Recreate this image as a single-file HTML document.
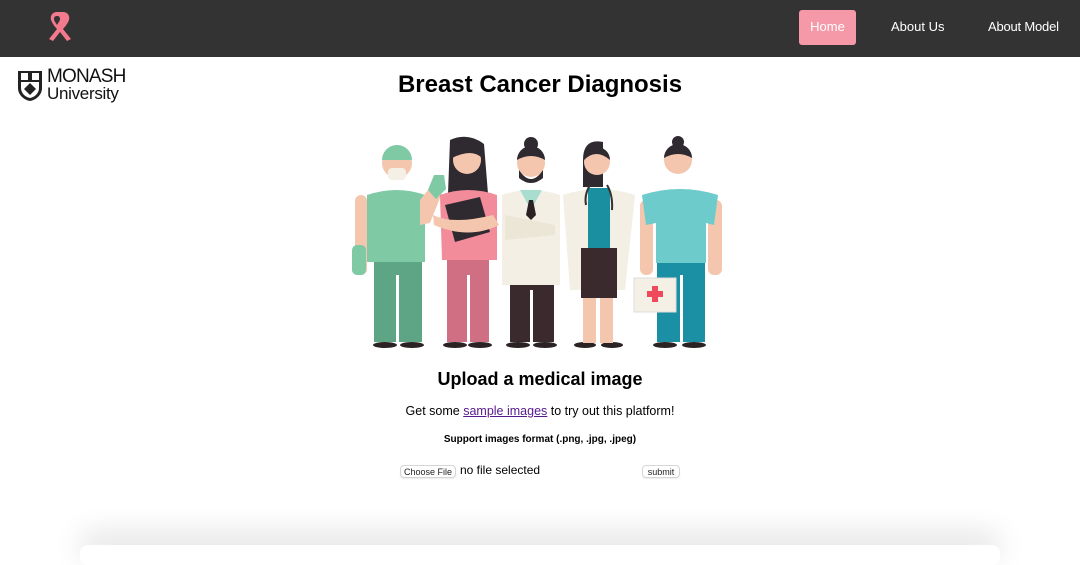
<!DOCTYPE html>
<html><head><meta charset="utf-8"><style>
*{margin:0;padding:0;box-sizing:border-box}
body{width:1080px;height:539px;overflow:hidden;background:#fff;font-family:"Liberation Sans",Arial,sans-serif;position:relative}
.nav{position:absolute;left:0;top:0;width:1080px;height:57px;background:#333}
.nav a{position:absolute;top:0;color:#fff;font-size:13px;text-decoration:none;line-height:14px}
.home{left:799px;top:10px!important;width:57px;height:35px;background:#f598a8;border-radius:3px;text-align:center;padding-top:10px}
h1{position:absolute;left:0;width:1080px;top:71px;text-align:center;font-size:24px;font-weight:bold}
h2{position:absolute;left:0;width:1080px;top:369px;text-align:center;font-size:18px;font-weight:bold}
.p{position:absolute;left:0;width:1080px;text-align:center}
.btn{position:absolute;border:1px solid #d6d6d6;border-radius:4px;background:#fff;font-size:9px;color:#222;text-align:center;line-height:12px;box-shadow:0 1px 1px rgba(0,0,0,.08)}
</style></head><body>
<div class="nav">
<svg style="position:absolute;left:42px;top:9px" width="30" height="34" viewBox="0 0 30 34">
<path d="M15 3c-5 0-7 4-6 8 1 3 4 7 6 9l-8 10 4 2 7-9 7 9 4-2-8-10c2-2 5-6 6-9 1-4-1-8-6-8zm0 4c2 0 3 1 3 3 0 2-2 4-3 6-1-2-3-4-3-6 0-2 1-3 3-3z" fill="#f27a8c"/>
</svg>
<a class="home" href="#">Home</a>
<a href="#" style="left:891px;top:20px">About Us</a>
<a href="#" style="left:988px;top:20px;letter-spacing:-0.2px">About Model</a>
</div>
<svg style="position:absolute;left:16px;top:70px" width="28" height="32" viewBox="0 0 28 32">
<path d="M2 1h24v17c0 7-6 12-12 13C8 30 2 25 2 18z" fill="#222"/>
<path d="M5 12h18v6c0 5-4 9-9 10-5-1-9-5-9-10z" fill="#fff"/>
<path d="M14 13l6 6-6 6-6-6z" fill="#222"/>
<rect x="5" y="3" width="7" height="7" fill="#fff"/><rect x="16" y="3" width="7" height="7" fill="#fff"/>
</svg>
<div style="position:absolute;left:47px;top:68px;font-size:19px;line-height:18px;color:#111;letter-spacing:-0.8px">MONASH</div>
<div style="position:absolute;left:47px;top:85px;font-size:17px;line-height:17px;color:#111;letter-spacing:-0.3px">University</div>
<h1>Breast Cancer Diagnosis</h1>
<svg style="position:absolute;left:0;top:0" width="1080" height="539">
<g fill="#2b2224">
<ellipse cx="385" cy="345" rx="12" ry="3"/><ellipse cx="412" cy="345" rx="12" ry="3"/>
<ellipse cx="455" cy="345" rx="12" ry="3"/><ellipse cx="480" cy="345" rx="12" ry="3"/>
<ellipse cx="518" cy="345" rx="12" ry="3"/><ellipse cx="545" cy="345" rx="12" ry="3"/>
<ellipse cx="585" cy="345" rx="11" ry="3"/><ellipse cx="612" cy="345" rx="11" ry="3"/>
<ellipse cx="665" cy="345" rx="12" ry="3"/><ellipse cx="694" cy="345" rx="12" ry="3"/>
</g>
<rect x="355" y="195" width="12" height="80" rx="6" fill="#f4c6ad"/>
<rect x="352" y="245" width="14" height="30" rx="5" fill="#7fc9a5"/>
<rect x="374" y="262" width="48" height="80" fill="#5ea585"/>
<rect x="396" y="275" width="3" height="67" fill="#fff"/>
<path d="M367 195q30-10 58 0v67h-58z" fill="#7fc9a5"/>
<path d="M420 200l12-15 10 8-12 30-10 2z" fill="#f4c6ad"/>
<path d="M428 190l6-15 10 0 2 14-10 10z" fill="#7fc9a5"/>
<circle cx="397" cy="163" r="15" fill="#f4c6ad"/>
<path d="M382 160a15 15 0 0 1 30 0z" fill="#7fc9a5"/>
<rect x="388" y="168" width="18" height="12" rx="4" fill="#f5f0e6"/>
<path d="M450 140q18-8 34 4l4 50h-40z" fill="#2f2a30"/>
<rect x="447" y="258" width="42" height="84" fill="#d06f83"/>
<rect x="467" y="275" width="3" height="67" fill="#fff"/>
<path d="M440 195q28-10 57 0v65h-55z" fill="#f28b9a"/>
<circle cx="467" cy="160" r="14" fill="#f4c6ad"/>
<path d="M452 158a15 15 0 0 1 30 0q-10-10-30 0z" fill="#2f2a30"/>
<path d="M445 205l35-8 10 35-35 10z" fill="#2f2a30"/>
<path d="M433 215q20 10 60 0l6 10q-30 15-65 0z" fill="#f4c6ad"/>
<rect x="510" y="285" width="44" height="57" fill="#3a2a2d"/>
<rect x="530" y="290" width="3" height="52" fill="#fff"/>
<path d="M502 195q29-10 58 0v90h-58z" fill="#f3efe4"/>
<path d="M520 190h22l-11 20z" fill="#a8ddd0"/>
<path d="M529 200h4l3 15-5 5-5-5z" fill="#2b2224"/>
<path d="M505 215l50 10v10l-50 5z" fill="#ece6d6"/>
<circle cx="531" cy="163" r="14" fill="#f4c6ad"/>
<circle cx="531" cy="144" r="7" fill="#2f2a30"/>
<path d="M517 160a14 14 0 0 1 28 0q-14-8-28 0z" fill="#2f2a30"/>
<path d="M519 170q12 18 24 0v8q-12 10-24 0z" fill="#2f2a30"/>
<rect x="583" y="295" width="13" height="48" fill="#f4c6ad"/><rect x="600" y="295" width="13" height="48" fill="#f4c6ad"/>
<path d="M563 195q35-12 72 0l-10 95h-55z" fill="#f3efe4"/>
<rect x="588" y="188" width="22" height="60" fill="#198fa0"/>
<path d="M581 248h36v50h-36z" fill="#3a2a2d"/>
<path d="M583 160q0-22 20-18v45h-20z" fill="#2f2a30"/>
<circle cx="597" cy="162" r="13" fill="#f4c6ad"/>
<path d="M584 160a13 13 0 0 1 26 0q-14-12-26 0z" fill="#2f2a30"/>
<path d="M590 185q-6 10-4 20M607 185q6 10 5 25" stroke="#333" stroke-width="2" fill="none"/>
<rect x="657" y="262" width="48" height="80" fill="#1b8fa3"/>
<rect x="680" y="275" width="3" height="67" fill="#fff"/>
<rect x="640" y="200" width="13" height="75" rx="6" fill="#f4c6ad"/>
<rect x="708" y="200" width="14" height="75" rx="6" fill="#f4c6ad"/>
<path d="M642 195q38-12 76 0l-4 30-8-2v40h-50v-40l-10 2z" fill="#6ecbcb"/>
<circle cx="678" cy="160" r="14" fill="#f4c6ad"/>
<path d="M664 158a14 14 0 0 1 28 0q-14-8-28 0z" fill="#2f2a30"/>
<circle cx="678" cy="142" r="6" fill="#2f2a30"/>
<rect x="634" y="278" width="42" height="34" fill="#f5f0e6" stroke="#ddd"/>
<path d="M652 286h6v5h5v6h-5v5h-6v-5h-5v-6h5z" fill="#ee4a5c"/>
</svg>
<h2>Upload a medical image</h2>
<div class="p" style="top:404px;font-size:12.5px">Get some <a href="#" style="color:#551a8b">sample images</a> to try out this platform!</div>
<div class="p" style="top:434px;font-size:10px;font-weight:bold">Support images format (.png, .jpg, .jpeg)</div>
<div class="btn" style="left:400px;top:465px;width:56px;height:13px">Choose File</div>
<div style="position:absolute;left:460px;top:463px;font-size:12px">no file selected</div>
<div class="btn" style="left:642px;top:465px;width:38px;height:13px">submit</div>
<div style="position:absolute;left:80px;top:545px;width:920px;height:20px;background:#fff;box-shadow:0 -10px 30px rgba(0,0,0,.14);border-radius:8px"></div>
</body></html>
